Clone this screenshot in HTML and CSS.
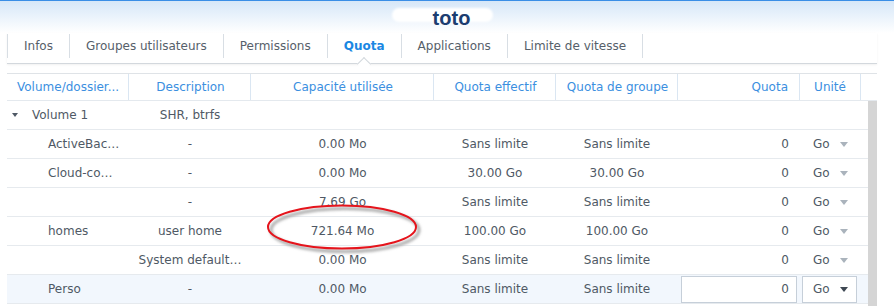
FILE: index.html
```html
<!DOCTYPE html>
<html lang="fr">
  <head>
    <meta charset="UTF-8" />
    <title>toto - Quota</title>
    <link rel="stylesheet" href="styles.css">
  </head>
  <body>
    <header class="title-bar">
      <h1 class="title">toto</h1>
    </header>
    <nav class="tabs">
      <span class="tab">Infos</span>
      <span class="tab">Groupes utilisateurs</span>
      <span class="tab">Permissions</span>
      <span class="tab active">Quota</span>
      <span class="tab">Applications</span>
      <span class="tab">Limite de vitesse</span>
    </nav>
    <div class="grid">
      <div class="grid-head">
        <div>Volume/dossier...</div>
        <div class="center">Description</div>
        <div class="center">Capacité utilisée</div>
        <div class="center">Quota effectif</div>
        <div class="center">Quota de groupe</div>
        <div class="num">Quota</div>
        <div class="center">Unité</div>
        <div></div>
      </div>
      <div class="grid-body">
        <div class="rows">
          <div class="row volume">
            <div class="name"><span class="tri"></span>Volume 1</div>
            <div class="center">SHR, btrfs</div>
          </div>
          <div class="row">
            <div class="name">ActiveBac…</div>
            <div class="center">-</div>
            <div class="center">0.00 Mo</div>
            <div class="center">Sans limite</div>
            <div class="center">Sans limite</div>
            <div class="num">0</div>
            <div class="unit">Go<span class="caret"></span></div>
          </div>
          <div class="row">
            <div class="name">Cloud-co…</div>
            <div class="center">-</div>
            <div class="center">0.00 Mo</div>
            <div class="center">30.00 Go</div>
            <div class="center">30.00 Go</div>
            <div class="num">0</div>
            <div class="unit">Go<span class="caret"></span></div>
          </div>
          <div class="row">
            <div class="name"></div>
            <div class="center">-</div>
            <div class="center">7.69 Go</div>
            <div class="center">Sans limite</div>
            <div class="center">Sans limite</div>
            <div class="num">0</div>
            <div class="unit">Go<span class="caret"></span></div>
          </div>
          <div class="row">
            <div class="name">homes</div>
            <div class="center">user home</div>
            <div class="center">721.64 Mo</div>
            <div class="center">100.00 Go</div>
            <div class="center">100.00 Go</div>
            <div class="num">0</div>
            <div class="unit">Go<span class="caret"></span></div>
          </div>
          <div class="row">
            <div class="name"></div>
            <div class="center">System default…</div>
            <div class="center">0.00 Mo</div>
            <div class="center">Sans limite</div>
            <div class="center">Sans limite</div>
            <div class="num">0</div>
            <div class="unit">Go<span class="caret"></span></div>
          </div>
          <div class="row selected">
            <div class="name">Perso</div>
            <div class="center">-</div>
            <div class="center">0.00 Mo</div>
            <div class="center">Sans limite</div>
            <div class="center">Sans limite</div>
            <div class="edit"><input class="quota-input" type="text" value="0" /></div>
            <div class="edit"><span class="select">Go<span class="caret dark"></span></span></div>
          </div>
        </div>
        <div class="scrollbar"></div>
      </div>
      <!-- red circle drawn over the screenshot -->
      <svg class="mark" width="180" height="64" viewBox="0 0 180 64">
        <defs>
          <filter id="soft" x="-10%" y="-30%" width="120%" height="160%">
            <feGaussianBlur stdDeviation="1.6" />
          </filter>
        </defs>
        <ellipse cx="90" cy="32" rx="74" ry="21.5" fill="none" stroke="#9a9a9a" stroke-width="2.5" filter="url(#soft)" />
        <ellipse cx="87" cy="29" rx="74" ry="21.5" fill="none" stroke="#e5141c" stroke-width="2" />
      </svg>
    </div>
  </body>
</html>
```

FILE: styles.css
```css
body {
  margin: 0;
  background: #fff;
  color: #4f5965;
  font-family: "DejaVu Sans", Verdana, sans-serif;
  font-size: 12px;
  overflow: hidden;
}
.title-bar {
  height: 33px;
  box-sizing: border-box;
  border-top: 1px solid #3a8ee6;
  background: linear-gradient(#d6e7f8, #fff);
  padding: 7px 0 0 9px;
  text-align: center;
}
.title {
  position: relative;
  z-index: 0;
  display: inline-block;
  margin: 0;
  font: bold 20px/20px "Liberation Sans", Arial, sans-serif;
  color: #1c3d70;
}
.title::before {
  content: "";
  position: absolute;
  z-index: -1;
  left: -41px;
  right: -23px;
  top: 0;
  height: 14px;
  border-radius: 7px;
  background: #fff;
  filter: blur(1px);
}
.tabs {
  display: flex;
  height: 31px;
  box-sizing: border-box;
  margin: 0 17px 0 7px;
  padding-top: 1px;
  border-bottom: 1px solid #d3d8dd;
  box-shadow: 0 1px 2px rgba(0, 0, 0, 0.06);
}
.tab {
  position: relative;
  height: 24px;
  line-height: 24px;
  padding: 0 16px;
  border-left: 1px solid #d8dee4;
  color: #56606a;
}
.tab:last-child {
  border-right: 1px solid #d8dee4;
}
.tab.active {
  color: #1a87e3;
  font-weight: bold;
}
.tab.active::after {
  content: "";
  position: absolute;
  left: calc(50% - 5px);
  top: calc(100% + 1px);
  width: 10px;
  height: 10px;
  box-sizing: border-box;
  background: #fff;
  border-top: 1px solid #d3d8dd;
  border-left: 1px solid #d3d8dd;
  transform: rotate(45deg);
}
.grid {
  position: relative;
  width: 870px;
  margin: 9px 0 0 7px;
}
.grid-head {
  display: grid;
  grid-template-columns: 122px 122px 183px 122px 122px 122px 61px 16px;
  height: 28px;
  box-sizing: border-box;
  border-top: 1px solid #dfe3e7;
  border-bottom: 1px solid #e4e9ee;
  color: #3b8fdf;
}
.grid-head > div {
  line-height: 26px;
  padding: 0 8px 0 10px;
  border-right: 1px solid #dae6f2;
  white-space: nowrap;
  overflow: hidden;
}
.grid-head > div:nth-child(7),
.grid-head > div:last-child {
  padding: 0;
}
.grid-head > div:last-child {
  border-right: 0;
}
.grid-body {
  display: flex;
  height: 205px;
}
.rows {
  width: 861px;
}
.scrollbar {
  width: 9px;
  background: #d5d5d5;
}
.row {
  display: grid;
  grid-template-columns: 122px 122px 183px 122px 122px 122px 61px 7px;
  align-items: center;
  height: 29px;
  box-sizing: border-box;
  border-bottom: 1px solid #e6eaee;
}
.row > div {
  padding: 0 8px;
  white-space: nowrap;
  overflow: hidden;
  text-overflow: ellipsis;
}
.row.selected {
  background: #f2f7fd;
}
.center {
  text-align: center;
}
.grid-head > .num,
.row > .num {
  text-align: right;
  padding-right: 11px;
}
.row > .name {
  padding-left: 41px;
}
.volume > .name {
  display: flex;
  align-items: center;
  padding-left: 5px;
}
.tri {
  width: 0;
  height: 0;
  margin-right: 14px;
  border-left: 3px solid transparent;
  border-right: 3px solid transparent;
  border-top: 4px solid #4f5965;
}
.row > .unit {
  display: flex;
  align-items: center;
  padding: 0 0 0 13px;
}
.caret {
  width: 0;
  height: 0;
  margin-left: 10px;
  border-left: 4px solid transparent;
  border-right: 4px solid transparent;
  border-top: 5px solid #aab3bc;
}
.caret.dark {
  border-top-color: #3e4853;
}
.row > .edit {
  display: flex;
  padding: 0 3px;
}
.row > .edit + .edit {
  padding: 0 0 0 2px;
}
.quota-input {
  width: 100%;
  height: 27px;
  box-sizing: border-box;
  padding: 0 7px;
  border: 1px solid #c6cfd9;
  background: #fff;
  color: #4f5965;
  font: inherit;
  text-align: right;
  outline: none;
}
.select {
  display: flex;
  align-items: center;
  width: 55px;
  height: 27px;
  box-sizing: border-box;
  padding-left: 10px;
  border: 1px solid #c6cfd9;
  background: #fff;
}
.mark {
  position: absolute;
  left: 248px;
  top: 125px;
}
```
